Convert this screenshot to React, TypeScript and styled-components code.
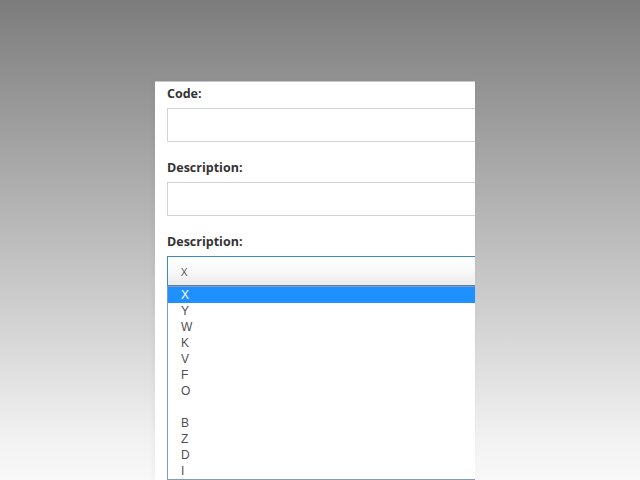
import React from "react";
import styled, { createGlobalStyle } from "styled-components";

const Global = createGlobalStyle`
  html, body { margin: 0; padding: 0; height: 100%; }
  body {
    width: 640px;
    height: 480px;
    overflow: hidden;
    background: linear-gradient(to bottom, #7c7c7c 0px, #f2f2f2 440px, #f8f8f8 480px);
    font-family: "Open Sans", "Noto Sans", sans-serif;
  }
`;

const Page = styled.div`
  display: flex;
  justify-content: flex-start;
  padding: 81px 0 0 155px;
  height: 480px;
  box-sizing: border-box;
`;

const Panel = styled.div`
  width: 320px;
  height: 399px;
  background: #fff;
  border-top: 1px solid #c9c9c9;
  overflow: hidden;
  box-sizing: border-box;
  padding: 2px 0 0 12px;
  box-shadow: -2px 0 6px rgba(0, 0, 0, 0.04);
`;

const Field = styled.div`
  display: flex;
  flex-direction: column;
  gap: 5px;
  margin-bottom: 16px;
`;

const Label = styled.label`
  font-family: "Open Sans", "Noto Sans", sans-serif;
  font-weight: 700;
  font-size: 12.5px;
  line-height: 19px;
  color: #333;
`;

const TextBox = styled.div`
  width: 330px;
  height: 34px;
  box-sizing: border-box;
  border: 1px solid #cfd4da;
  background: #fff;
`;

const SelectWrap = styled.div`
  display: flex;
  flex-direction: column;
  width: 330px;
`;

const SelectBox = styled.div`
  height: 30px;
  box-sizing: border-box;
  border: 1px solid #3a8cc4;
  border-bottom-color: #5a7e9a;
  background: linear-gradient(to bottom, #ffffff 0%, #f8f8f8 50%, #ebebeb 100%);
  display: flex;
  align-items: center;
  padding-left: 13px;
  font-family: "Open Sans", "Noto Sans", sans-serif;
  font-size: 11px;
  color: #555;
`;

const List = styled.ul`
  list-style: none;
  margin: 0;
  padding: 0;
  border: 1px solid #7f9bc4;
  background: #fff;
`;

const Item = styled.li<{ $active?: boolean }>`
  height: 16px;
  line-height: 17px;
  padding-left: 13px;
  font-family: "Liberation Sans", Arial, sans-serif;
  font-size: 12px;
  color: ${(p) => (p.$active ? "#fff" : "#505050")};
  background: ${(p) => (p.$active ? "#1e90ff" : "transparent")};
`;

const options = ["X", "Y", "W", "K", "V", "F", "O", "", "B", "Z", "D", "I"];

export default function App() {
  return (
    <>
      <Global />
      <Page>
        <Panel>
          <Field>
            <Label>Code:</Label>
            <TextBox />
          </Field>
          <Field>
            <Label>Description:</Label>
            <TextBox />
          </Field>
          <Field>
            <Label>Description:</Label>
            <SelectWrap>
              <SelectBox>X</SelectBox>
              <List>
                {options.map((o, i) => (
                  <Item key={i} $active={i === 0}>
                    {o || "\u00a0"}
                  </Item>
                ))}
              </List>
            </SelectWrap>
          </Field>
        </Panel>
      </Page>
    </>
  );
}
